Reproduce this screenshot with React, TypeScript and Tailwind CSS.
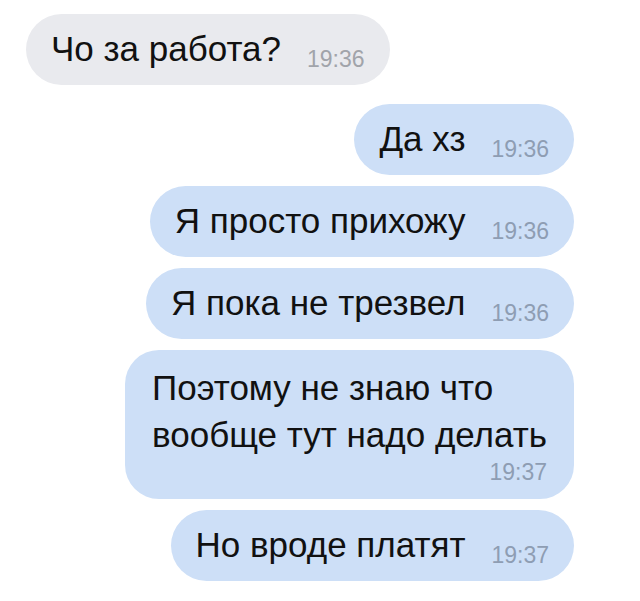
import React from "react";

type Message = {
  text: string[];
  time: string;
  out: boolean;
};

const messages: Message[] = [
  { text: ["Чо за работа?"], time: "19:36", out: false },
  { text: ["Да хз"], time: "19:36", out: true },
  { text: ["Я просто прихожу"], time: "19:36", out: true },
  { text: ["Я пока не трезвел"], time: "19:36", out: true },
  { text: ["Поэтому не знаю что", "вообще тут надо делать"], time: "19:37", out: true },
  { text: ["Но вроде платят"], time: "19:37", out: true },
];

function Bubble({ message }: { message: Message }) {
  const bg = message.out ? "bg-[#cddff7]" : "bg-[#e9eaee]";
  const timeColor = message.out ? "text-[#8e9db3]" : "text-[#a1a4aa]";

  if (message.text.length > 1) {
    return (
      <div className={`${bg} flex flex-col rounded-[34px] pb-[13px] pl-[27px] pr-[27px] pt-[14px]`}>
        {message.text.map((line) => (
          <span key={line} className="text-[35px] leading-[47px] text-[#111]">
            {line}
          </span>
        ))}
        <span className={`self-end text-[23px] leading-[28px] ${timeColor}`}>{message.time}</span>
      </div>
    );
  }

  return (
    <div className={`${bg} flex h-[71px] items-baseline rounded-full pl-[25px] pr-[25px] pt-[15px]`}>
      <span className="text-[35px] leading-[40px] text-[#111]">{message.text[0]}</span>
      <span className={`ml-[26px] translate-y-[6px] text-[23px] ${timeColor}`}>{message.time}</span>
    </div>
  );
}

export default function App() {
  const [first, ...rest] = messages;

  return (
    <div className="min-h-[601px] w-[640px] bg-white pt-[14px] font-['Liberation_Sans',Arial,sans-serif]">
      <div className="flex pl-[26px]">
        <Bubble message={first} />
      </div>
      <div className="mt-[19px] flex flex-col items-end gap-[11px] pr-[66px]">
        {rest.map((message, index) => (
          <Bubble message={message} key={index} />
        ))}
      </div>
    </div>
  );
}
